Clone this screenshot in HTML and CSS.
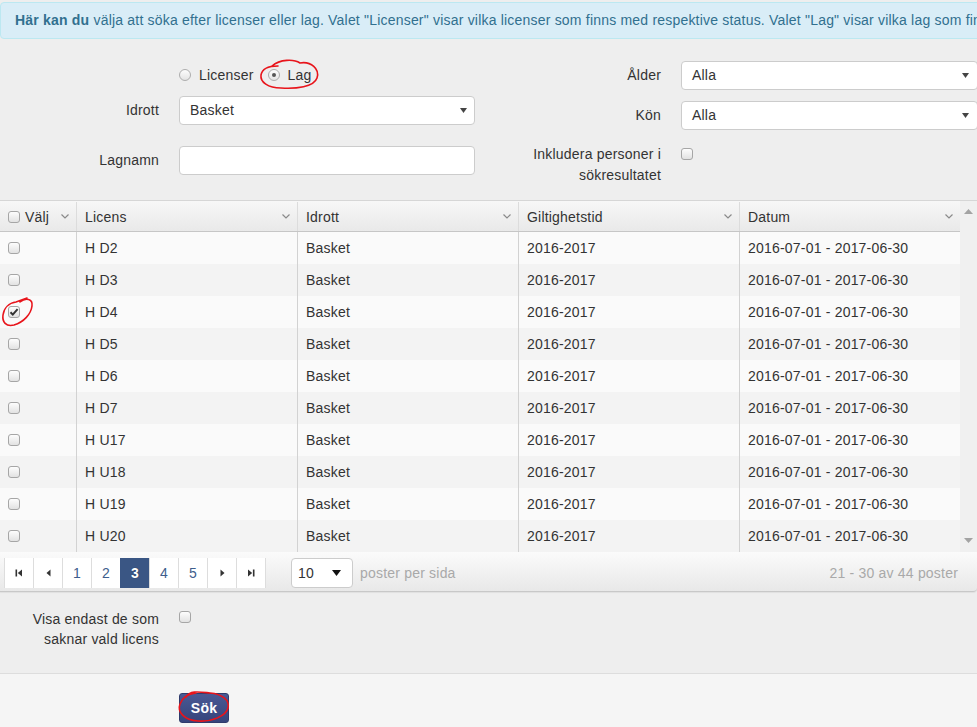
FILE: index.html
```html
<!DOCTYPE html>
<html lang="sv">
<head>
<meta charset="utf-8">
<title>Sök licenser</title>
<link rel="stylesheet" href="styles.css">
</head>
<body>
<div class="alert"><b>Här kan du</b> välja att söka efter licenser eller lag. Valet "Licenser" visar vilka licenser som finns med respektive status. Valet "Lag" visar vilka lag som finns registrerade för vald idrott.</div>

<div class="filters">
  <div class="col col-left">
    <div class="row">
      <span class="lbl"></span>
      <div class="radios">
        <span class="radio"><span class="rb"></span>Licenser</span>
        <span class="radio"><span class="rb checked"></span>Lag</span>
      </div>
    </div>
    <div class="row gap7">
      <span class="lbl">Idrott</span>
      <div class="select"><span>Basket</span><svg class="caret" width="7" height="5" viewBox="0 0 7 5"><path d="M0 0H7L3.5 5Z"/></svg></div>
    </div>
    <div class="row gap22">
      <span class="lbl">Lagnamn</span>
      <div class="input"></div>
    </div>
  </div>
  <div class="col col-right">
    <div class="row">
      <span class="lbl">Ålder</span>
      <div class="select select-r"><span>Alla</span><svg class="caret" width="7" height="5" viewBox="0 0 7 5"><path d="M0 0H7L3.5 5Z"/></svg></div>
    </div>
    <div class="row gap12">
      <span class="lbl">Kön</span>
      <div class="select select-r"><span>Alla</span><svg class="caret" width="7" height="5" viewBox="0 0 7 5"><path d="M0 0H7L3.5 5Z"/></svg></div>
    </div>
    <div class="row row-multi gap15">
      <span class="lbl">Inkludera personer i sökresultatet</span>
      <span class="cb cb-top"></span>
    </div>
  </div>
</div>

<div class="grid">
  <div class="grid-main">
    <div class="tr thead">
      <div class="th"><span class="th-l"><span class="cb"></span>Välj</span><svg class="chev" width="8" height="5" viewBox="0 0 8 5"><path d="M0.5 0.5L4 4L7.5 0.5"/></svg></div>
      <div class="th"><span>Licens</span><svg class="chev" width="8" height="5" viewBox="0 0 8 5"><path d="M0.5 0.5L4 4L7.5 0.5"/></svg></div>
      <div class="th"><span>Idrott</span><svg class="chev" width="8" height="5" viewBox="0 0 8 5"><path d="M0.5 0.5L4 4L7.5 0.5"/></svg></div>
      <div class="th"><span>Giltighetstid</span><svg class="chev" width="8" height="5" viewBox="0 0 8 5"><path d="M0.5 0.5L4 4L7.5 0.5"/></svg></div>
      <div class="th"><span>Datum</span><svg class="chev" width="8" height="5" viewBox="0 0 8 5"><path d="M0.5 0.5L4 4L7.5 0.5"/></svg></div>
    </div>
    <div class="tr"><div class="td"><span class="cb"></span></div><div class="td">H D2</div><div class="td">Basket</div><div class="td">2016-2017</div><div class="td">2016-07-01 - 2017-06-30</div></div>
    <div class="tr alt"><div class="td"><span class="cb"></span></div><div class="td">H D3</div><div class="td">Basket</div><div class="td">2016-2017</div><div class="td">2016-07-01 - 2017-06-30</div></div>
    <div class="tr"><div class="td"><span class="cb checked"><svg width="10" height="10" viewBox="0 0 10 10"><path d="M1.5 5.2L3.8 7.6L8.6 2.2" /></svg></span></div><div class="td">H D4</div><div class="td">Basket</div><div class="td">2016-2017</div><div class="td">2016-07-01 - 2017-06-30</div></div>
    <div class="tr alt"><div class="td"><span class="cb"></span></div><div class="td">H D5</div><div class="td">Basket</div><div class="td">2016-2017</div><div class="td">2016-07-01 - 2017-06-30</div></div>
    <div class="tr"><div class="td"><span class="cb"></span></div><div class="td">H D6</div><div class="td">Basket</div><div class="td">2016-2017</div><div class="td">2016-07-01 - 2017-06-30</div></div>
    <div class="tr alt"><div class="td"><span class="cb"></span></div><div class="td">H D7</div><div class="td">Basket</div><div class="td">2016-2017</div><div class="td">2016-07-01 - 2017-06-30</div></div>
    <div class="tr"><div class="td"><span class="cb"></span></div><div class="td">H U17</div><div class="td">Basket</div><div class="td">2016-2017</div><div class="td">2016-07-01 - 2017-06-30</div></div>
    <div class="tr alt"><div class="td"><span class="cb"></span></div><div class="td">H U18</div><div class="td">Basket</div><div class="td">2016-2017</div><div class="td">2016-07-01 - 2017-06-30</div></div>
    <div class="tr"><div class="td"><span class="cb"></span></div><div class="td">H U19</div><div class="td">Basket</div><div class="td">2016-2017</div><div class="td">2016-07-01 - 2017-06-30</div></div>
    <div class="tr alt"><div class="td"><span class="cb"></span></div><div class="td">H U20</div><div class="td">Basket</div><div class="td">2016-2017</div><div class="td">2016-07-01 - 2017-06-30</div></div>
  </div>
  <div class="vscroll">
    <svg width="9" height="5" viewBox="0 0 9 5"><path d="M0 5H9L4.5 0Z"/></svg>
    <svg width="9" height="5" viewBox="0 0 9 5"><path d="M0 0H9L4.5 5Z"/></svg>
  </div>
</div>

<div class="pager">
  <div class="pages">
    <span class="pg"><svg width="8" height="8" viewBox="0 0 8 8"><rect x="0.5" y="0.5" width="1.6" height="7"/><path d="M7 0.5V7.5L2.8 4Z"/></svg></span>
    <span class="pg"><svg width="5" height="8" viewBox="0 0 5 8"><path d="M4.5 0.5V7.5L0.5 4Z"/></svg></span>
    <span class="pg num">1</span>
    <span class="pg num">2</span>
    <span class="pg num current">3</span>
    <span class="pg num">4</span>
    <span class="pg num">5</span>
    <span class="pg"><svg width="5" height="8" viewBox="0 0 5 8"><path d="M0.5 0.5V7.5L4.5 4Z"/></svg></span>
    <span class="pg"><svg width="8" height="8" viewBox="0 0 8 8"><path d="M1 0.5V7.5L5.2 4Z"/><rect x="5.9" y="0.5" width="1.6" height="7"/></svg></span>
  </div>
  <div class="pagesize"><span>10</span><svg width="9" height="6" viewBox="0 0 9 6"><path d="M0 0H9L4.5 6Z"/></svg></div>
  <span class="muted per">poster per sida</span>
  <span class="muted info">21 - 30 av 44 poster</span>
</div>

<div class="extra">
  <div class="row-multi">
    <span class="lbl">Visa endast de som saknar vald licens</span>
    <span class="cb cb-top"></span>
  </div>
</div>

<div class="footer">
  <button class="btn" type="button">Sök</button>
</div>

<svg class="marks" width="977" height="727" viewBox="0 0 977 727">
  <path d="M272 66C280 59 294 59 300 63C311 61 320 69 317 78C314 87 296 89 281 88C268 88 260 82 261 75C262 69 268 66 278 66"/>
  <path d="M20 302C26 297 33 299 32 306C31 314 24 322 14 325C6 327 2 322 3 315C4 308 9 303 16 302L27 298"/>
  <path d="M186 697C190 690 200 692 210 693C222 694 230 700 228 708C226 716 212 722 198 721C184 720 177 712 180 704C182 698 188 694 196 693"/>
</svg>
</body>
</html>
```

FILE: styles.css
```css
* { box-sizing: border-box; }
html, body { margin: 0; padding: 0; overflow: hidden; }
body {
  width: 977px;
  height: 727px;
  position: relative;
  font-family: "Liberation Sans", Arial, sans-serif;
  font-size: 14px;
  letter-spacing: 0.2px;
  color: #333;
  background: #eeeeee;
}

.alert {
  margin-top: 2px;
  width: 1040px;
  padding: 8px 14px;
  line-height: 19px;
  background: #d9edf7;
  border: 1px solid #bce8f1;
  border-radius: 4px;
  color: #31708f;
  white-space: nowrap;
  overflow: hidden;
}

/* filters */
.filters { display: flex; padding: 22px 0 14px; }
.col { display: flex; flex-direction: column; }
.col-left { width: 475px; }
.col-right { flex: 1; }
.row { display: flex; align-items: center; height: 28px; }
.gap7 { margin-top: 7px; }
.gap12 { margin-top: 12px; }
.gap15 { margin-top: 15px; }
.gap22 { margin-top: 22px; }
.lbl { flex: 0 0 179px; padding-right: 20px; text-align: right; }
.col-right .lbl { flex-basis: 206px; }

.radios { display: flex; align-items: center; }
.radio { display: flex; align-items: center; }
.radio + .radio { margin-left: 14px; }
.rb {
  width: 12px; height: 12px; border-radius: 50%;
  border: 1px solid #adadad;
  background: linear-gradient(#fdfdfd, #e4e4e4);
  margin-right: 8px;
  display: flex; align-items: center; justify-content: center;
}
.rb.checked::after {
  content: ""; width: 4px; height: 4px; border-radius: 50%; background: #555;
}

.select, .input {
  width: 296px; height: 29px;
  border: 1px solid #cccccc; border-radius: 4px;
  background: #fff;
}
.select {
  display: flex; align-items: center; justify-content: space-between;
  padding: 0 7px 0 10px;
}
.select-r { width: 297px; padding-right: 8px; }
.caret { fill: #444; }

.row-multi { display: flex; align-items: flex-start; line-height: 21px; height: auto; }
.row-multi .lbl { line-height: 21px; }

.cb {
  width: 12px; height: 12px; flex: 0 0 12px;
  border: 1px solid #a6a6a6; border-radius: 3px;
  background: linear-gradient(#fdfdfd, #e2e2e2);
  display: inline-flex; align-items: center; justify-content: center;
}
.cb svg { fill: none; stroke: #333; stroke-width: 2; }
.cb-top { margin-top: 4px; }

/* grid */
.grid { display: flex; border-top: 1px solid #d6d6d6; }
.grid-main { width: 960px; }
.tr { display: grid; grid-template-columns: 76px 221px 221px 221px 221px; height: 32px; background: #fafafa; }
.tr.alt { background: #f3f3f3; }
.thead {
  height: 31px;
  padding-top: 1px;
  background: linear-gradient(#f7f7f7, #e9e9e9);
  border-bottom: 1px solid #c6c6c6;
}
.th, .td { display: flex; align-items: center; padding-left: 8px; white-space: nowrap; }
.th + .th, .td + .td { border-left: 1px solid #d2d2d2; }
.th + .th { border-left-color: #dcdcdc; }
.th { justify-content: space-between; padding-right: 7px; }
.th-l { display: flex; align-items: center; }
.th-l .cb { margin-right: 5px; }
.chev { fill: none; stroke: #8a8a8a; stroke-width: 1.2; }

.vscroll {
  width: 17px;
  background: #f0f0f0;
  display: flex; flex-direction: column; justify-content: space-between; align-items: center;
  padding: 8px 0 9px;
}
.vscroll svg { fill: #a3a3a3; }

/* pager */
.pager {
  height: 40px;
  display: flex; align-items: flex-start;
  padding: 6px 19px 0 4px;
  background: linear-gradient(#fbfbfb, #e8e8e8);
  border-bottom: 1px solid #c8c8c8;
  border-bottom-right-radius: 4px;
  box-shadow: 0 1px 1px rgba(0,0,0,0.06);
}
.pages { display: flex; background: #fff; border-right: 1px solid #dddddd; }
.pg {
  width: 29px; height: 30px;
  border-left: 1px solid #dddddd;
  display: flex; align-items: center; justify-content: center;
  color: #3e5d8c;
  font-size: 14px;
  letter-spacing: 0;
}
.pg svg { fill: #333; }
.pg.current { background: #3a5684; color: #fff; font-weight: bold; border-left-color: #3a5684; text-shadow: 0 0 1px rgba(0,0,0,0.4); }
.pagesize {
  margin-left: 25px;
  width: 62px; height: 30px;
  background: #fff;
  border: 1px solid #cccccc; border-radius: 4px;
  display: flex; align-items: center; justify-content: space-between;
  padding: 0 11px 0 6px;
}
.pagesize svg { fill: #111; }
.muted { color: #a9a9a9; line-height: 30px; }
.per { margin-left: 7px; }
.info { margin-left: auto; }

/* extra */
.extra {
  height: 82px;
  padding-top: 17px;
  border-bottom: 1px solid #dddddd;
}
.extra .row-multi { line-height: 20px; }
.extra .lbl { line-height: 20px; }
.extra .cb-top { margin-top: 2px; }

.footer {
  background: #f5f5f5;
  height: 100px;
  padding: 19px 0 0 179px;
}
.btn {
  width: 50px; height: 30px;
  font-family: "Liberation Sans", Arial, sans-serif;
  font-size: 14px; font-weight: bold;
  letter-spacing: 0.2px;
  color: #fff;
  background: linear-gradient(#4a5994, #36447c);
  border: 1px solid #2f3b6c;
  border-radius: 3px;
  padding: 0;
}

.marks {
  position: absolute; left: 0; top: 0;
  pointer-events: none;
  fill: none; stroke: #e8141b; stroke-width: 1.6; stroke-linecap: round;
}
```
